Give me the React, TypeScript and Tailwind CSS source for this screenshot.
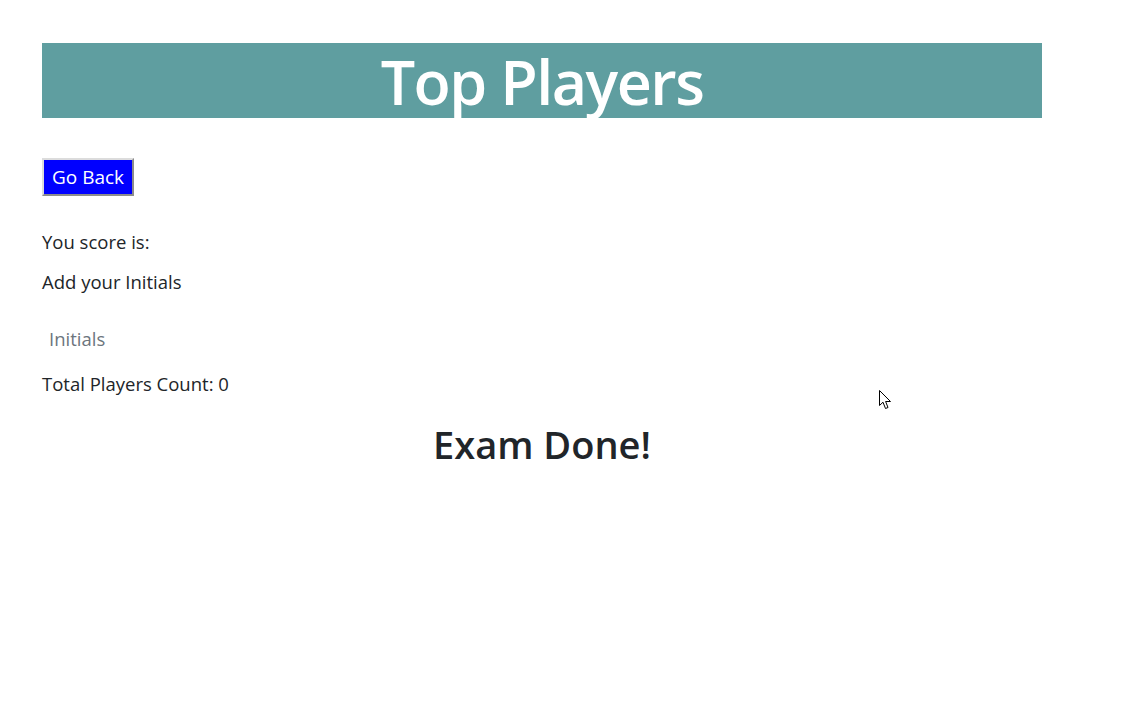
import React from "react";

export default function App() {
  return (
    <div className="relative min-h-[711px] bg-white text-[#212529]" style={{ fontFamily: '"Open Sans", "Noto Sans", sans-serif' }}>
      <div className="ml-[42px] w-[1000px] pt-[43px]">
        <div className="h-[75px] bg-[#5f9ea0]">
          <h1 className="text-center text-[61px] font-semibold leading-[78px] text-white tracking-[-1.5px]">Top Players</h1>
        </div>
        <div className="mt-[40px]">
          <button className="h-[38px] border-2 border-t-[#dcdcdc] border-l-[#dcdcdc] border-r-[#8c8c8c] border-b-[#8c8c8c] bg-[#0000ff] px-[8px] text-[19px] leading-none text-white">
            Go Back
          </button>
        </div>
        <p className="mt-[32px] text-[18.5px] leading-[28px]">You score is:</p>
        <p className="mt-[12px] text-[18.5px] leading-[28px]">Add your Initials</p>
        <input
          className="mt-[22px] block h-[40px] w-[300px] px-[7px] text-[18.5px] outline-none placeholder:text-[#6c757d]"
          placeholder="Initials"
        />
        <p className="mt-[12px] text-[18.5px] leading-[28px]">Total Players Count: 0</p>
        <h2 className="mt-[22px] text-center text-[38px] font-semibold leading-[48px]">Exam Done!</h2>
      </div>
      <svg className="absolute left-[879px] top-[390px]" width="13" height="21" viewBox="0 0 13 21">
        <path d="M0.5 0.5 L0.5 15.5 L4 12.2 L6.5 18.5 L9 17.5 L6.6 11.5 L11.5 11.5 Z" fill="#fff" stroke="#000" strokeWidth="1" strokeLinejoin="miter" />
      </svg>
    </div>
  );
}
